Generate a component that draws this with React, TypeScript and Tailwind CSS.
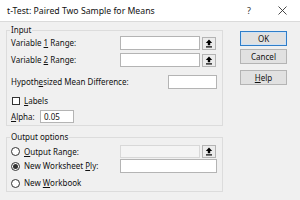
import React from "react";

const RefButton = () => (
  <div className="ml-[2px] flex h-[13px] w-[14px] items-center justify-center border border-[#b4b4b4] bg-[#ececec]">
    <svg width="8" height="9" viewBox="0 0 8 9">
      <path d="M4 0.5L0.8 4H2.8V6.2H5.2V4H7.2Z" fill="#000" />
      <rect x="1" y="7.3" width="6" height="1.2" fill="#000" />
    </svg>
  </div>
);

const Radio = ({ checked }: { checked?: boolean }) => (
  <span className="flex h-[9px] w-[9px] shrink-0 items-center justify-center rounded-full border border-[#333] bg-white">
    {checked ? <span className="h-[5px] w-[5px] rounded-full bg-[#333]" /> : null}
  </span>
);

export default function App() {
  return (
    <div
      className="relative h-[200px] w-[300px] overflow-hidden bg-[#f0f0f0] text-[8px] leading-[12px] text-[#111]"
      style={{ fontFamily: '"Noto Sans", "Open Sans", sans-serif' }}
    >
      <div className="flex h-[22px] items-center border-b border-[#dadada] bg-white pl-[7px] pr-[13px] text-[8.7px]">
        <span>t-Test: Paired Two Sample for Means</span>
        <span className="ml-auto mr-[27px] text-[9px] text-[#333]">?</span>
        <svg width="9" height="9" viewBox="0 0 9 9">
          <path d="M0.5 0.5L8.5 8.5M8.5 0.5L0.5 8.5" stroke="#333" strokeWidth="0.9" />
        </svg>
      </div>

      <div className="flex pl-[6px] pt-[2px]">
        <div className="w-[217px]">
          <fieldset className="border border-[#dcdcdc] pb-[2px] pr-[5px]">
            <legend className="ml-[3px] px-[1px]">Input</legend>
            <div className="flex h-[14px] items-center">
              <span className="w-[113px] pl-[4px]">
                Variable <u>1</u> Range:
              </span>
              <div className="h-[14px] w-[80px] border border-[#b4b4b4] bg-white" />
              <RefButton />
            </div>
            <div className="mt-[3px] flex h-[14px] items-center">
              <span className="w-[113px] pl-[4px]">
                Variable <u>2</u> Range:
              </span>
              <div className="h-[14px] w-[80px] border border-[#b4b4b4] bg-white" />
              <RefButton />
            </div>
            <div className="mt-[8px] flex h-[14px] items-center">
              <span className="pl-[4px]">
                Hypoth<u>e</u>sized Mean Difference:
              </span>
              <div className="ml-auto h-[14px] w-[49px] border border-[#b4b4b4] bg-white" />
            </div>
            <div className="mt-[6px] flex h-[12px] items-center pl-[5px]">
              <span className="h-[8px] w-[8px] border border-[#333] bg-white" />
              <span className="ml-[4px]">
                <u>L</u>abels
              </span>
            </div>
            <div className="mt-[3px] flex h-[13px] items-center pl-[4px]">
              <span className="w-[29px]">
                <u>A</u>lpha:
              </span>
              <div className="flex h-[13px] w-[34px] items-center border border-[#b4b4b4] bg-white pl-[3px]">
                0.05
              </div>
            </div>
          </fieldset>

          <fieldset className="mt-[5px] border border-[#dcdcdc] pb-[2px]">
            <legend className="ml-[3px] px-[1px]">Output options</legend>
            <div className="mt-[2px] flex h-[13px] items-center pl-[4px]">
              <div className="flex w-[109px] items-center gap-[4px]">
                <Radio />
                <span>
                  <u>O</u>utput Range:
                </span>
              </div>
              <div className="h-[13px] w-[80px] border border-[#d8d8d8] bg-[#f4f4f4]" />
              <RefButton />
            </div>
            <div className="mt-[1px] flex h-[14px] items-center pl-[4px]">
              <div className="flex w-[109px] items-center gap-[4px]">
                <Radio checked />
                <span>
                  New Worksheet <u>P</u>ly:
                </span>
              </div>
              <div className="h-[14px] w-[97px] border border-[#b4b4b4] bg-white" />
            </div>
            <div className="mt-[4px] flex h-[12px] items-center gap-[4px] pl-[4px]">
              <Radio />
              <span>
                New <u>W</u>orkbook
              </span>
            </div>
          </fieldset>
        </div>

        <div className="ml-[17px] flex w-[47px] flex-col pt-[7px]">
          <div className="flex h-[15px] items-center justify-center border border-[#2f7dc8] bg-[#e1e1e1] shadow-[inset_0_0_0_1px_#cfe2f5]">
            OK
          </div>
          <div className="mt-[3px] flex h-[15px] items-center justify-center border border-[#b4b4b4] bg-[#e1e1e1]">
            Cancel
          </div>
          <div className="mt-[6px] flex h-[15px] items-center justify-center border border-[#b4b4b4] bg-[#e1e1e1]">
            <span>
              <u>H</u>elp
            </span>
          </div>
        </div>
      </div>
    </div>
  );
}
